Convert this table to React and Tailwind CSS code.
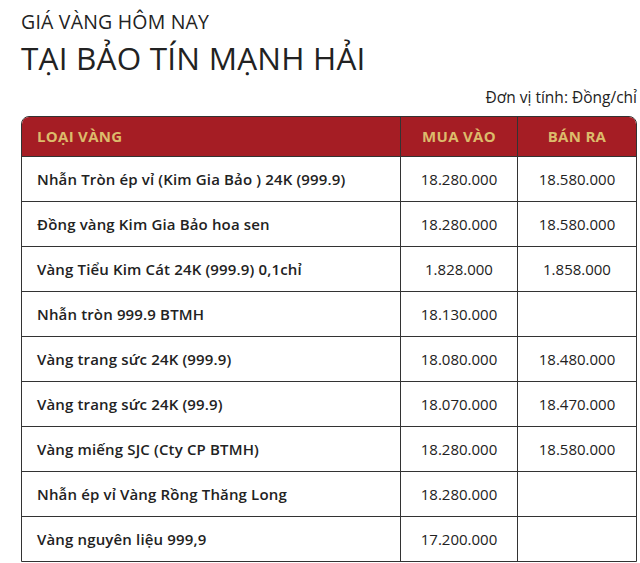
import React from "react";

const rows = [
  ["Nhẫn Tròn ép vỉ (Kim Gia Bảo ) 24K (999.9)", "18.280.000", "18.580.000"],
  ["Đồng vàng Kim Gia Bảo hoa sen", "18.280.000", "18.580.000"],
  ["Vàng Tiểu Kim Cát 24K (999.9) 0,1chỉ", "1.828.000", "1.858.000"],
  ["Nhẫn tròn 999.9 BTMH", "18.130.000", ""],
  ["Vàng trang sức 24K (999.9)", "18.080.000", "18.480.000"],
  ["Vàng trang sức 24K (99.9)", "18.070.000", "18.470.000"],
  ["Vàng miếng SJC (Cty CP BTMH)", "18.280.000", "18.580.000"],
  ["Nhẫn ép vỉ Vàng Rồng Thăng Long", "18.280.000", ""],
  ["Vàng nguyên liệu 999,9", "17.200.000", ""],
];

export default function App() {
  return (
    <div className="w-[640px] h-[563px] overflow-hidden bg-white text-[#222] font-['Open_Sans',sans-serif]">
      <div className="pl-[21px] pr-[3px] pt-[9px]">
        <div className="text-[19.5px] leading-[26px] tracking-[0.2px]">GIÁ VÀNG HÔM NAY</div>
        <div className="text-[31.5px] leading-[40px] mt-[3px] tracking-[0.2px]">TẠI BẢO TÍN MẠNH HẢI</div>
        <div className="text-right text-[15.5px] leading-[20px] mt-[9px]">Đơn vị tính: Đồng/chỉ</div>
        <div className="mt-[9px] w-[616px] border border-[#333] rounded-t-[8px] overflow-hidden">
          <div className="grid grid-cols-[379px_117px_118px] h-[39px] bg-[#a51d24] text-[#dcbb6b] font-bold text-[15px] tracking-[0.3px]">
            <div className="flex items-center pl-[15px] border-r border-[#333]">LOẠI VÀNG</div>
            <div className="flex items-center justify-center border-r border-[#333]">MUA VÀO</div>
            <div className="flex items-center justify-center">BÁN RA</div>
          </div>
          {rows.map((r, i) => (
            <div key={i} className="grid grid-cols-[379px_117px_118px] h-[45px] border-t border-[#333] text-[15px]">
              <div className="flex items-center pl-[15px] border-r border-[#333] font-semibold tracking-[0.15px]">{r[0]}</div>
              <div className="flex items-center justify-center border-r border-[#333]">{r[1]}</div>
              <div className="flex items-center justify-center">{r[2]}</div>
            </div>
          ))}
        </div>
      </div>
    </div>
  );
}
